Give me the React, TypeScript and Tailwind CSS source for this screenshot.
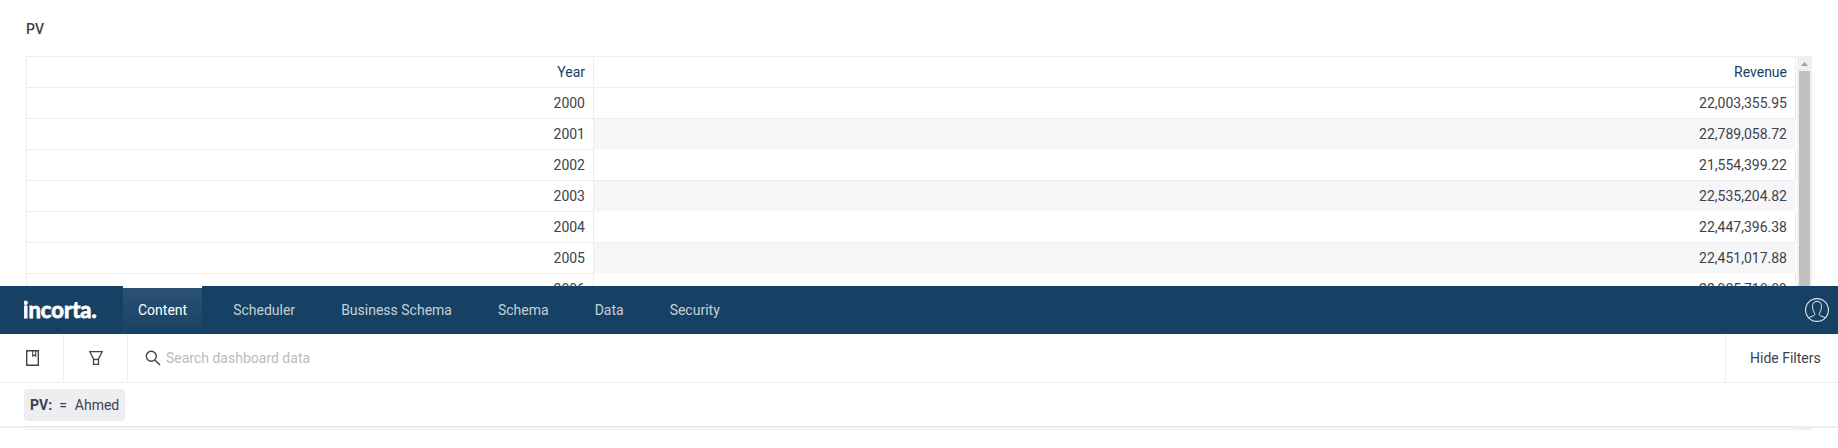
const rows = [
  ["2000", "22,003,355.95"],
  ["2001", "22,789,058.72"],
  ["2002", "21,554,399.22"],
  ["2003", "22,535,204.82"],
  ["2004", "22,447,396.38"],
  ["2005", "22,451,017.88"],
  ["2006", "22,905,718.89"],
];

const tabs = ["Content", "Scheduler", "Business Schema", "Schema", "Data", "Security"];

function DataTable() {
  return (
    <div className="ml-[26px] flex h-[230px] w-[1786px] shrink-0 overflow-hidden">
      <div className="w-[568px] shrink-0 border-x border-t border-[#ecedf1] text-right">
        <div className="h-[31px] border-b border-[#ecedf1] pr-2 leading-[30px] text-[#174164]">Year</div>
        {rows.map(([year]) => (
          <div key={year} className="h-[31px] border-b border-[#ecedf1] pr-2 leading-[30px]">{year}</div>
        ))}
      </div>
      <div className="w-[1202px] shrink-0 border-t border-[#ecedf1] text-right">
        <div className="h-[31px] border-r border-b border-[#ecedf1] pr-2 leading-[30px] text-[#174164]">Revenue</div>
        {rows.map(([year, value], i) => (
          <div
            key={year}
            className={
              i % 2
                ? "h-[31px] border-r border-b border-white bg-[#f6f6f9] bg-clip-padding pr-2 leading-[30px]"
                : "h-[31px] border-r border-b border-[#ecedf1] pr-2 leading-[30px]"
            }
          >
            {value}
          </div>
        ))}
      </div>
      <div className="ml-px flex w-[15px] flex-col items-center bg-[#f0f0f0]">
        <div className="flex h-[15px] items-center justify-center">
          <svg width="7" height="4" viewBox="0 0 7 4" className="mt-px" fill="#a3a3a3">
            <path d="M3.5 0L7 4H0Z" />
          </svg>
        </div>
        <div className="w-[11px] flex-1 bg-[#c1c1c1]" />
      </div>
    </div>
  );
}

function NavBar() {
  return (
    <nav className="flex h-12 shrink-0 bg-[#174164]">
      <div className="w-[123px] shrink-0 pl-6">
        <svg width="76" height="48" viewBox="0 0 76 48">
          <text
            x="-1.2"
            y="31.5"
            textLength="74"
            lengthAdjust="spacingAndGlyphs"
            className="fill-white stroke-white font-['Lato',sans-serif] text-[23px] font-bold"
            strokeWidth="0.8"
          >
            incorta.
          </text>
        </svg>
      </div>
      <div className="flex gap-4">
        {tabs.map((tab, i) => (
          <div
            key={tab}
            className={
              i === 0
                ? "border-t-2 border-white bg-linear-to-b from-[#2c5275] to-[#174164] bg-clip-padding px-[15px] leading-[45px] text-white"
                : "px-[15px] leading-[49px] text-[#c5d0d8]"
            }
          >
            {tab}
          </div>
        ))}
      </div>
      <svg className="mt-3 mr-[9px] ml-auto" width="24" height="24" viewBox="0 0 24 24" fill="none" stroke="#e0e7ed">
        <circle cx="12" cy="12" r="11.4" strokeWidth="1.1" />
        <path
          d="M3.8 19.8C5 18.4 9.5 18.2 9.8 16.6C10 14.8 7.5 13 7.5 8.5C7.5 5 9 3.4 12 3.4S16.5 5 16.5 8.5C16.5 13 14 14.8 14.2 16.6C14.5 18.2 19 18.4 20.2 19.8"
          strokeWidth="1"
        />
      </svg>
    </nav>
  );
}

function Toolbar() {
  return (
    <div className="flex h-[49px] shrink-0 border-b border-[#ecedf1]">
      <div className="w-16 border-r border-[#ecedf1] pt-4 pl-[26px]">
        <svg width="13" height="16" viewBox="0 0 13 16" fill="none" stroke="#3f4248">
          <path d="M.7 .7H12.3V15.3H.7Z" strokeWidth="1.4" />
          <path d="M6.7 .5V6.2L8.2 5L9.7 6.2V.5" strokeWidth="1.1" />
        </svg>
      </div>
      <div className="w-16 border-r border-[#ecedf1] pt-[17px] pl-[25px]">
        <svg width="14" height="14" viewBox="0 0 14 14" fill="none" stroke="#3f4248" strokeWidth="1.3">
          <path d="M.8 .7H13.2L9.5 8V13.3H4.5V8Z" />
          <path d="M4.5 8.5H9.5" />
        </svg>
      </div>
      <div className="flex flex-1 pl-[17px] text-[#bbbbbb]">
        <svg className="mt-4" width="16" height="16" viewBox="0 0 16 16" fill="none" stroke="#3f4248" strokeWidth="1.4">
          <circle cx="6.3" cy="6.3" r="5" />
          <path d="M9.9 9.9L15 15" />
        </svg>
        <span className="ml-[5px] leading-[49px]">Search dashboard data</span>
      </div>
      <div className="w-[113px] border-l border-[#ecedf1] pl-6 leading-[49px]">Hide Filters</div>
    </div>
  );
}

export default function App() {
  return (
    <div className="flex h-[448px] w-[1838px] flex-col overflow-hidden bg-white font-['Roboto',sans-serif] text-[14px] text-[#404249]">
      <div className="flex h-[286px] shrink-0 flex-col overflow-hidden">
        <div className="h-14 shrink-0 pt-[19px] pl-[26px] leading-5 font-medium">PV</div>
        <DataTable />
      </div>
      <NavBar />
      <Toolbar />
      <div className="h-[45px] shrink-0 border-b-2 border-[#ecedf3] pt-1.5 pl-6">
        <div className="flex h-8 w-[101px] rounded bg-[#edeef2] pl-1.5 leading-8">
          <span className="font-bold">PV:</span>
          <span className="ml-[7px]">=</span>
          <span className="ml-2">Ahmed</span>
        </div>
      </div>
      <div className="flex h-0.5 shrink-0 pl-[26px]">
        <div className="w-[1770px] border-x border-b border-[#ecedf1]" />
        <div className="ml-px w-[15px] bg-[#f0f0f0]" />
      </div>
    </div>
  );
}
